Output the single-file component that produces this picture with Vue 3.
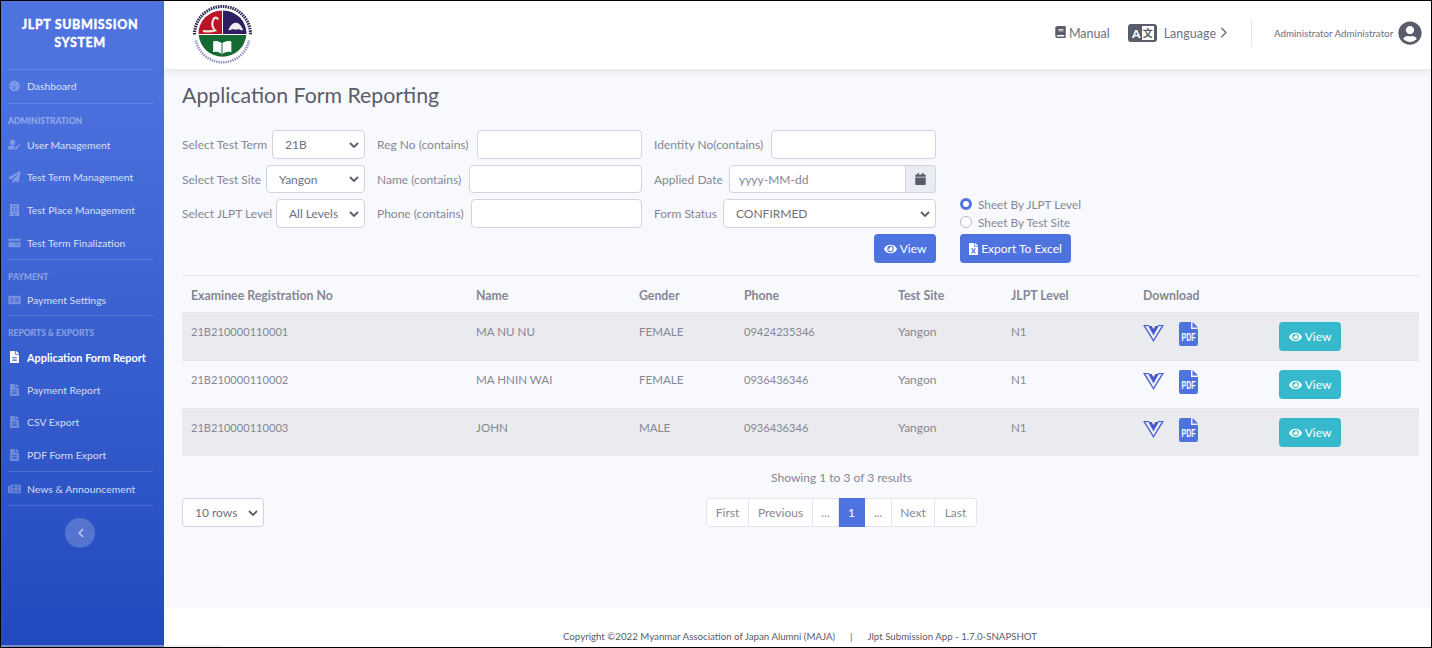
<template>
  <div class="frame">
    <aside class="sidebar">
      <div class="brand">JLPT SUBMISSION<br />SYSTEM</div>
      <template v-for="(group, g) in navGroups" :key="g">
        <div class="side-line"></div>
        <div v-if="group.title" class="side-title">{{ group.title }}</div>
        <a
          v-for="item in group.items"
          :key="item.label"
          class="nav-item"
          :class="{ active: item.active, compact: group.compact }"
        >
          <svg class="nav-icon" :viewBox="icons[item.icon].box" fill="currentColor"><path :d="icons[item.icon].d" /></svg>
          <span>{{ item.label }}</span>
        </a>
      </template>
      <div class="side-line"></div>
      <button class="collapse-btn">
        <svg viewBox="0 0 10 14" width="7" height="10" fill="none" stroke="currentColor" stroke-width="2.4" stroke-linecap="round" stroke-linejoin="round"><path d="M8 2 3 7l5 5" /></svg>
      </button>
    </aside>

    <div class="main">
      <header class="topbar">
        <svg class="logo" viewBox="0 0 60 60">
          <path d="M1.500 30a28.500 28.500 0 0 1 57 0" fill="none" stroke="#2b2a55" stroke-width="3.200" stroke-dasharray="1.600 .9" />
          <path d="M3 36a27.500 27.500 0 0 0 54 0" fill="none" stroke="#8f8dc4" stroke-width="2.600" stroke-dasharray="1.400 1" />
          <path d="M29.500 29.500H5.500A24 24 0 0 1 29.500 5.500z" fill="#b8152a" />
          <path d="M30.500 29.500h24A24 24 0 0 0 30.500 5.500z" fill="#2c1e60" />
          <path d="M5.800 30.500h48.400A24.300 24.300 0 0 1 5.800 30.500z" fill="#146a32" />
          <path d="M11 26.500c4 .5 8 .5 11.500-.5-3-3-4-7-1.500-12 1-1.500 3-1.500 4 0" fill="none" stroke="#f2e6d8" stroke-width="2.200" stroke-linecap="round" />
          <path d="M36 25.500c1.500-4 4-7.500 7.500-7.500s6 3.500 7.500 7.500c-2 .5-3.500 0-4.500-1-2 1-4 1-6 0-1.500 1-3 1.500-4.500 1z" fill="#eeeef4" />
          <path d="M20.500 37c4-1 6.500 0 9 2 2.500-2 5.500-3 9.500-2v11c-4-1-7 0-9.500 2-2.500-2-5-3-9-2z" fill="#fff" />
          <path d="M29.500 39v11" stroke="#146a32" stroke-width="1" />
        </svg>
        <div class="top-right">
          <a class="top-link">
            <svg class="book" viewBox="0 0 448 512" fill="currentColor"><path :d="icons.book.d" /></svg>
            <span>Manual</span>
          </a>
          <a class="top-link lang">
            <span class="lang-icon"><span class="lang-a">A</span><span class="lang-b">文</span></span>
            <span>Language</span>
            <svg class="chev" viewBox="0 0 10 14" fill="none" stroke="currentColor" stroke-width="1.800" stroke-linecap="round" stroke-linejoin="round"><path d="M2 1.500 7.500 7 2 12.500" /></svg>
          </a>
          <div class="top-sep"></div>
          <span class="user-name">Administrator Administrator</span>
          <svg class="avatar" viewBox="0 0 496 512" fill="currentColor"><path :d="icons.user.d" /></svg>
        </div>
      </header>

      <main class="content">
        <h1 class="page-title">Application Form Reporting</h1>

        <form class="filters" @submit.prevent>
          <div class="f-col col1">
            <div v-for="f in col1" :key="f.label" class="f-row" :class="f.size">
              <label :style="{ width: f.w + 'px' }">{{ f.label }}</label>
              <select class="ctl sel"><option>{{ f.value }}</option></select>
            </div>
          </div>
          <div class="f-col col2">
            <div v-for="f in col2" :key="f.label" class="f-row" :class="f.size">
              <label :style="{ width: f.w + 'px' }">{{ f.label }}</label>
              <input class="ctl" type="text" />
            </div>
          </div>
          <div class="f-col col3">
            <div class="f-row h29">
              <label class="lw117">Identity No(contains)</label>
              <input class="ctl" type="text" />
            </div>
            <div class="f-row h28">
              <label class="lw75">Applied Date</label>
              <div class="date-group">
                <input class="ctl date-input" type="text" placeholder="yyyy-MM-dd" />
                <span class="date-btn">
                  <svg viewBox="0 0 448 512" width="11" height="12" fill="currentColor"><path :d="icons.calendar.d" /></svg>
                </span>
              </div>
            </div>
            <div class="f-row h29">
              <label class="lw69">Form Status</label>
              <select class="ctl sel"><option>CONFIRMED</option></select>
            </div>
            <div class="f-row h29 end">
              <button type="button" class="btn primary view-main">
                <svg class="eye" viewBox="0 0 576 512" fill="currentColor"><path :d="icons.eye.d" /></svg>
                View
              </button>
            </div>
          </div>
          <div class="f-col col4">
            <label class="radio"><span class="dot on"></span>Sheet By JLPT Level</label>
            <label class="radio"><span class="dot"></span>Sheet By Test Site</label>
            <button type="button" class="btn primary export">
              <svg class="file-x" viewBox="0 0 384 512" fill="currentColor"><path :d="icons.fileExcel.d" /></svg>
              Export To Excel
            </button>
          </div>
        </form>

        <table class="grid">
          <colgroup>
            <col v-for="w in colWidths" :key="w.k" :style="{ width: w.v + 'px' }" />
          </colgroup>
          <thead>
            <tr>
              <th>Examinee Registration No</th>
              <th>Name</th>
              <th>Gender</th>
              <th>Phone</th>
              <th>Test Site</th>
              <th>JLPT Level</th>
              <th>Download</th>
              <th></th>
            </tr>
          </thead>
          <tbody>
            <tr v-for="r in rows" :key="r.reg">
              <td class="num">{{ r.reg }}</td>
              <td class="caps">{{ r.name }}</td>
              <td class="caps">{{ r.gender }}</td>
              <td class="num">{{ r.phone }}</td>
              <td>Yangon</td>
              <td class="caps">N1</td>
              <td class="act-cell">
                <div class="dl">
                  <svg class="vee" viewBox="0 0 21 17">
                    <path d="M0 0h6l4.500 8L15 0h6L10.500 17z" fill="#4e63cf" />
                    <path d="M2.400 1h2.800l5.300 9.500L15.800 1h2.800L10.500 14.500z" fill="#eef0fa" />
                    <path d="M6.200 1h2.400l1.900 3.200L12.400 1h2.400l-4.300 7.600z" fill="#3f55c8" />
                  </svg>
                  <svg class="pdf" viewBox="0 0 19 24">
                    <path d="M2 0h10v7h7v15a2 2 0 0 1-2 2H2a2 2 0 0 1-2-2V2a2 2 0 0 1 2-2z" fill="#4e73df" />
                    <path d="M13.500 0 19 5.500h-5.500z" fill="#4e73df" />
                    <text transform="translate(2.500 19) scale(.7 1)" class="pdf-text">PDF</text>
                  </svg>
                </div>
              </td>
              <td class="act-cell">
                <button class="btn info">
                  <svg class="eye" viewBox="0 0 576 512" fill="currentColor"><path :d="icons.eye.d" /></svg>
                  View
                </button>
              </td>
            </tr>
          </tbody>
        </table>

        <div class="showing">Showing 1 to 3 of 3 results</div>
        <div class="pager-row">
          <select class="ctl sel rows-sel"><option>10 rows</option></select>
          <ul class="pager">
            <li v-for="p in pages" :key="p.k" :class="{ current: p.current }" :style="{ width: p.w + 'px' }">{{ p.label }}</li>
          </ul>
        </div>
      </main>

      <footer class="footer">
        <span>Copyright ©2022 Myanmar Association of Japan Alumni (MAJA)</span>
        <span class="foot-bar">|</span>
        <span>Jlpt Submission App - 1.7.0-SNAPSHOT</span>
      </footer>
    </div>
    <div class="bottom-strip"></div>
  </div>
</template>

<script setup>
const icons = {
  gauge: { box: '0 0 16 16', d: 'M8 1a7 7 0 1 0 0 14A7 7 0 0 0 8 1zm0 2.200a1 1 0 1 1 0 2 1 1 0 0 1 0-2zM4 7a1 1 0 1 1 0 2 1 1 0 0 1 0-2zm8 0a1 1 0 1 1 0 2 1 1 0 0 1 0-2zM8.800 6.500l.8.300-1 3.300a1.500 1.500 0 1 1-1.200-.4z' },
  userEdit: { box: '0 0 20 16', d: 'M7 0a4 4 0 1 1 0 8 4 4 0 0 1 0-8zM3 9h6.500c.5 0 1 .1 1.400.3L9 12.500V15H1.500A1.500 1.500 0 0 1 0 13.500V12a3 3 0 0 1 3-3zm7 4.500 5-5 2 2-5 5h-2zM16 7.500l1-1a.7.7 0 0 1 1 0l1 1a.7.7 0 0 1 0 1l-1 1z' },
  plane: { box: '0 0 512 512', d: 'M476 3.200L12.500 270.600c-18.100 10.400-15.800 35.600 2.200 43.200L121 358.400l287.300-253.200c5.500-4.900 13.300 2.600 8.600 8.300L176 407v80.500c0 23.600 28.500 32.900 42.500 15.800L282 426l124.600 52.200c14.200 6 30.400-2.900 33-18.200l72-432C515 7.800 493.300-6.800 476 3.200z' },
  building: { box: '0 0 448 512', d: 'M436 480h-20V24c0-13.300-10.700-24-24-24H56C42.700 0 32 10.700 32 24v456H12c-6.600 0-12 5.400-12 12v20h448v-20c0-6.600-5.400-12-12-12zM128 76c0-6.600 5.400-12 12-12h40c6.600 0 12 5.400 12 12v40c0 6.600-5.400 12-12 12h-40c-6.600 0-12-5.400-12-12V76zm0 96c0-6.600 5.400-12 12-12h40c6.600 0 12 5.400 12 12v40c0 6.600-5.400 12-12 12h-40c-6.600 0-12-5.400-12-12v-40zm52 148h-40c-6.600 0-12-5.400-12-12v-40c0-6.600 5.400-12 12-12h40c6.600 0 12 5.400 12 12v40c0 6.600-5.400 12-12 12zm76 160h-64v-84c0-6.600 5.400-12 12-12h40c6.600 0 12 5.400 12 12v84zm64-172c0 6.600-5.400 12-12 12h-40c-6.600 0-12-5.400-12-12v-40c0-6.600 5.400-12 12-12h40c6.600 0 12 5.400 12 12v40zm0-96c0 6.600-5.400 12-12 12h-40c-6.600 0-12-5.400-12-12v-40c0-6.600 5.400-12 12-12h40c6.600 0 12 5.400 12 12v40zm0-96c0 6.600-5.400 12-12 12h-40c-6.600 0-12-5.400-12-12V76c0-6.600 5.400-12 12-12h40c6.600 0 12 5.400 12 12v40z' },
  card: { box: '0 0 18 14', d: 'M2 1h14a1.500 1.500 0 0 1 1.500 1.500V4H.5V2.500A1.500 1.500 0 0 1 2 1zM.5 6h17v5.500A1.500 1.500 0 0 1 16 13H2a1.500 1.500 0 0 1-1.500-1.500zM10 8v1.500h5V8z' },
  idCard: { box: '0 0 18 14', d: 'M2 1h14a1.500 1.500 0 0 1 1.500 1.500v9A1.500 1.500 0 0 1 16 13H2a1.500 1.500 0 0 1-1.500-1.500v-9A1.500 1.500 0 0 1 2 1zm3.500 2.500a1.500 1.500 0 1 0 0 3 1.500 1.500 0 0 0 0-3zM3 9.500h5V8H3zm7-5v1.500h5V4.500zm0 3v1.500h5V7.500z' },
  file: { box: '0 0 384 512', d: 'M224 136V0H24C10.700 0 0 10.700 0 24v464c0 13.300 10.700 24 24 24h336c13.300 0 24-10.700 24-24V160H248c-13.200 0-24-10.800-24-24zM96 264h192v32H96zm0 64h192v32H96zm0 64h192v32H96zM377 105 279.100 7c-4.500-4.500-10.600-7-17-7H256v128h128v-6.100c0-6.300-2.500-12.400-7-16.900z' },
  news: { box: '0 0 18 14', d: 'M4 1h12.500A1.500 1.500 0 0 1 18 2.500v9a1.500 1.500 0 0 1-1.500 1.500H2a2 2 0 0 1-2-2V3h2.500v8h1V2a1 1 0 0 1 .5-1zm2 2v3h4V3zm6 0v1h4V3zm0 2v1h4V5zM6 8v1h4V8zm6 0v1h4V8zm-6 2v1h4v-1zm6 0v1h4v-1z' },
  book: { box: '0 0 448 512', d: 'M448 360V24c0-13.300-10.700-24-24-24H96C43 0 0 43 0 96v320c0 53 43 96 96 96h328c13.300 0 24-10.700 24-24v-16c0-7.500-3.500-14.300-8.900-18.700-4.200-15.400-4.200-59.300 0-74.700 5.400-4.300 8.900-11.100 8.900-18.600zM128 134c0-3.300 2.700-6 6-6h212c3.300 0 6 2.700 6 6v20c0 3.300-2.700 6-6 6H134c-3.300 0-6-2.700-6-6v-20zm0 64c0-3.300 2.700-6 6-6h212c3.300 0 6 2.700 6 6v20c0 3.300-2.700 6-6 6H134c-3.300 0-6-2.700-6-6v-20zm253.400 250H96c-17.700 0-32-14.300-32-32 0-17.600 14.400-32 32-32h285.400c-1.900 17.100-1.900 46.900 0 64z' },
  user: { box: '0 0 496 512', d: 'M248 8C111 8 0 119 0 256s111 248 248 248 248-111 248-248S385 8 248 8zm0 96c48.600 0 88 39.400 88 88s-39.400 88-88 88-88-39.400-88-88 39.400-88 88-88zm0 344c-58.700 0-111.300-26.600-146.500-68.200 18.800-35.400 55.600-59.800 98.500-59.800 2.400 0 4.800.4 7.100 1.100 13 4.200 26.600 6.900 40.900 6.900 14.300 0 28-2.700 40.900-6.900 2.300-.7 4.700-1.100 7.100-1.100 42.900 0 79.700 24.400 98.500 59.800C359.300 421.400 306.700 448 248 448z' },
  calendar: { box: '0 0 448 512', d: 'M12 192h424c6.600 0 12 5.400 12 12v260c0 26.500-21.500 48-48 48H48c-26.500 0-48-21.500-48-48V204c0-6.600 5.400-12 12-12zm436-44v-36c0-26.500-21.500-48-48-48h-48V12c0-6.600-5.400-12-12-12h-40c-6.600 0-12 5.400-12 12v52H160V12c0-6.600-5.400-12-12-12h-40c-6.600 0-12 5.400-12 12v52H48C21.500 64 0 85.500 0 112v36c0 6.600 5.400 12 12 12h424c6.600 0 12-5.400 12-12z' },
  eye: { box: '0 0 576 512', d: 'M572.520 241.400C518.290 135.590 410.930 64 288 64S57.680 135.640 3.480 241.410a32.350 32.350 0 0 0 0 29.190C57.710 376.410 165.070 448 288 448s230.320-71.640 284.520-177.410a32.350 32.350 0 0 0 0-29.190zM288 400a144 144 0 1 1 144-144 143.930 143.930 0 0 1-144 144zm0-240a95.310 95.310 0 0 0-25.310 3.790 47.850 47.850 0 0 1-66.900 66.900A95.780 95.780 0 1 0 288 160z' },
  fileExcel: { box: '0 0 384 512', d: 'M224 136V0H24C10.700 0 0 10.700 0 24v464c0 13.300 10.700 24 24 24h336c13.300 0 24-10.700 24-24V160H248c-13.200 0-24-10.800-24-24zm60.100 106.500L224 336l60.100 93.500c5.100 8-.6 18.500-10.100 18.500h-34.900c-4.400 0-8.500-2.400-10.600-6.300C208.900 405.500 192 373 192 373c-6.100 14.100-9.500 19-36.600 68.800-2.100 3.900-6.100 6.300-10.500 6.300H110c-9.500 0-15.200-10.500-10.100-18.500l60.300-93.500-60.300-93.500c-5.200-8 .6-18.500 10.100-18.500h34.800c4.400 0 8.500 2.400 10.600 6.300 26.100 48.800 20 33.600 36.600 68.500 0 0 6.100-11.700 36.600-68.500 2.100-3.900 6.200-6.300 10.600-6.300H274c9.500-.1 15.200 10.400 10.100 18.400zM384 121.900v6.100H256V0h6.100c6.400 0 12.500 2.500 17 7l97.900 98c4.500 4.500 7 10.600 7 16.900z' }
}

const navGroups = [
  { items: [{ label: 'Dashboard', icon: 'gauge' }] },
  {
    title: 'Administration',
    items: [
      { label: 'User Management', icon: 'userEdit' },
      { label: 'Test Term Management', icon: 'plane' },
      { label: 'Test Place Management', icon: 'building' },
      { label: 'Test Term Finalization', icon: 'card' }
    ]
  },
  { title: 'Payment', compact: true, items: [{ label: 'Payment Settings', icon: 'idCard' }] },
  {
    title: 'Reports & Exports',
    items: [
      { label: 'Application Form Report', icon: 'file', active: true },
      { label: 'Payment Report', icon: 'file' },
      { label: 'CSV Export', icon: 'file' },
      { label: 'PDF Form Export', icon: 'file' }
    ]
  },
  { items: [{ label: 'News & Announcement', icon: 'news' }] }
]

const col1 = [
  { label: 'Select Test Term', value: '21B', w: 90, size: 'h29' },
  { label: 'Select Test Site', value: 'Yangon', w: 84, size: 'h28' },
  { label: 'Select JLPT Level', value: 'All Levels', w: 94, size: 'h29' }
]
const col2 = [
  { label: 'Reg No (contains)', w: 100, size: 'h29' },
  { label: 'Name (contains)', w: 92, size: 'h28' },
  { label: 'Phone (contains)', w: 94, size: 'h29' }
]

const colWidths = [285, 163, 105, 154, 113, 132, 136, 149].map((v, k) => ({ k, v }))

const rows = [
  { reg: '21B210000110001', name: 'MA NU NU', gender: 'FEMALE', phone: '09424235346' },
  { reg: '21B210000110002', name: 'MA HNIN WAI', gender: 'FEMALE', phone: '0936436346' },
  { reg: '21B210000110003', name: 'JOHN', gender: 'MALE', phone: '0936436346' }
]

const pages = [
  { k: 'first', label: 'First', w: 43 },
  { k: 'prev', label: 'Previous', w: 64 },
  { k: 'd1', label: '...', w: 26 },
  { k: 'cur', label: '1', w: 26, current: true },
  { k: 'd2', label: '...', w: 27 },
  { k: 'next', label: 'Next', w: 43 },
  { k: 'last', label: 'Last', w: 42 }
]
</script>

<style>
html, body {
  margin: 0;
  background: #000;
}
</style>

<style scoped>
.frame {
  position: relative;
  width: 1432px;
  height: 648px;
  box-sizing: border-box;
  border: 1px solid #000;
  display: flex;
  overflow: hidden;
  font-family: Lato, "Noto Sans", sans-serif;
  font-size: 12px;
  color: #858796;
}

/* sidebar */
.sidebar {
  width: 163px;
  flex: none;
  display: flex;
  flex-direction: column;
  background: linear-gradient(180deg, #4e73df 10%, #224abe 100%);
  color: rgba(255, 255, 255, 0.8);
}
.brand {
  height: 68px;
  box-sizing: border-box;
  padding: 15px 5px 0 0;
  text-align: center;
  color: #fff;
  font-weight: 900;
  font-size: 12.500px;
  line-height: 18px;
  letter-spacing: 0.6px;
  -webkit-text-stroke: 0.3px #fff;
}
.side-line {
  height: 1px;
  flex: none;
  margin: 0 11px 0 7px;
  background: rgba(255, 255, 255, 0.15);
}
.side-title {
  height: 25px;
  box-sizing: border-box;
  padding: 11px 0 0 7px;
  font-size: 8.500px;
  line-height: 12px;
  font-weight: 900;
  text-transform: uppercase;
  color: rgba(255, 255, 255, 0.4);
}
.nav-item {
  height: 32.600px;
  flex: none;
  display: flex;
  align-items: center;
  padding-left: 7px;
  gap: 6px;
  font-size: 10.400px;
}
.nav-item.compact {
  height: 30px;
}
.nav-item.active {
  color: #fff;
  font-weight: 700;
  font-size: 10.900px;
}
.nav-icon {
  width: 13px;
  height: 12px;
  color: rgba(255, 255, 255, 0.3);
  flex: none;
}
.active .nav-icon {
  color: #fff;
}
.collapse-btn {
  width: 30px;
  height: 30px;
  margin: 12px 0 0 64px;
  padding: 0;
  border: 0;
  border-radius: 50%;
  background: rgba(255, 255, 255, 0.2);
  color: rgba(255, 255, 255, 0.6);
  display: flex;
  align-items: center;
  justify-content: center;
}
.bottom-strip {
  position: absolute;
  left: 0;
  bottom: 0;
  width: 221px;
  height: 2px;
  background: rgba(225, 225, 228, 0.45);
}

/* main column */
.main {
  flex: 1;
  min-width: 0;
  display: flex;
  flex-direction: column;
  background: #fff;
}
.topbar {
  height: 68px;
  flex: none;
  box-sizing: border-box;
  display: flex;
  align-items: center;
  justify-content: space-between;
  padding: 0 9px 4px 29px;
  background: #fff;
  box-shadow: 0 2px 8px rgba(58, 59, 69, 0.12);
  position: relative;
  z-index: 1;
}
.logo {
  width: 59px;
  height: 59px;
  margin-top: 2px;
}
.top-right {
  display: flex;
  align-items: center;
  color: #5a5c69;
}
.top-link {
  display: flex;
  align-items: center;
  font-size: 12.500px;
  color: #6e707e;
}
.book {
  width: 11px;
  height: 12px;
  margin-right: 3px;
  color: #5a5c69;
  margin-top: -2px;
}
.lang {
  margin-left: 18px;
}
.lang-icon {
  width: 29px;
  height: 18px;
  box-sizing: border-box;
  padding: 2px 3px 2px 3px;
  margin-right: 7px;
  background: #5a5c69;
  border-radius: 3px;
  display: flex;
  align-items: center;
  justify-content: space-between;
  color: #fff;
  font-size: 12px;
  font-weight: 900;
}
.lang-a {
  width: 11px;
  text-align: center;
}
.lang-b {
  width: 12px;
  height: 14px;
  background: #fff;
  color: #5a5c69;
  font-size: 10px;
  font-weight: 700;
  line-height: 14px;
  text-align: center;
  font-family: "Noto Sans CJK SC", sans-serif;
}
.chev {
  width: 8px;
  height: 11px;
  margin-left: 4px;
  margin-top: -2px;
}
.top-sep {
  width: 1px;
  height: 28px;
  margin: 0 22px 0 23px;
  background: #e3e6f0;
}
.user-name {
  font-size: 9.750px;
  color: #6e707e;
  width: 118px;
  white-space: nowrap;
}
.avatar {
  width: 24px;
  height: 24px;
  margin-left: 6px;
}

/* content */
.content {
  flex: 1;
  min-height: 0;
  box-sizing: border-box;
  padding: 12px 12px 0 18px;
  background: #f8f9fc;
}
.page-title {
  margin: 0 0 21px;
  font-size: 21.300px;
  line-height: 28px;
  font-weight: 400;
  color: #5a5c69;
}
.filters {
  display: flex;
  align-items: stretch;
  border-bottom: 1px solid #e3e6f0;
  padding-bottom: 12px;
  height: 133px;
}
.f-col {
  display: flex;
  flex-direction: column;
  gap: 6px;
}
.col1 { width: 183px; }
.col2 { width: 265px; margin-left: 12px; }
.col3 { width: 282px; margin-left: 12px; }
.col4 {
  margin-left: 24px;
  gap: 0;
  justify-content: flex-end;
}
.f-row {
  display: flex;
  align-items: stretch;
}
.h29 { height: 29px; }
.h28 { height: 28px; }
.end { justify-content: flex-end; }
.f-row label {
  flex: none;
  align-self: center;
  white-space: nowrap;
  color: #858796;
}
.lw117 { width: 117px; }
.lw75 { width: 75px; }
.lw69 { width: 69px; }
.ctl {
  flex: 1;
  min-width: 0;
  box-sizing: border-box;
  height: 100%;
  border: 1px solid #d1d3e2;
  border-radius: 4px;
  background: #fff;
  padding: 0 12px;
  font: inherit;
  color: #6e707e;
  outline: none;
}
.ctl::placeholder {
  color: #858796;
}
.sel {
  appearance: none;
  padding: 0 20px 0 12px;
  background-image: url("data:image/svg+xml,%3Csvg xmlns='http://www.w3.org/2000/svg' viewBox='0 0 10 6'%3E%3Cpath d='M1 1l4 4 4-4' fill='none' stroke='%235a5c69' stroke-width='1.8'/%3E%3C/svg%3E");
  background-repeat: no-repeat;
  background-position: right 5px center;
  background-size: 10px 6px;
}
.date-group {
  flex: 1;
  min-width: 0;
  display: flex;
}
.date-input {
  border-radius: 4px 0 0 4px;
  padding-left: 9px;
}
.date-btn {
  width: 30px;
  flex: none;
  box-sizing: border-box;
  border: 1px solid #d1d3e2;
  border-left: 0;
  border-radius: 0 4px 4px 0;
  background: #eaecf4;
  color: #5a5c69;
  display: flex;
  align-items: center;
  justify-content: center;
}
.radio {
  display: flex;
  align-items: center;
  height: 18px;
  font-size: 11.800px;
  white-space: nowrap;
}
.dot {
  width: 12px;
  height: 12px;
  box-sizing: border-box;
  margin-right: 6px;
  border: 1px solid #b7b9cc;
  border-radius: 50%;
  background: #fff;
}
.dot.on {
  border: 3.500px solid #4e73df;
}
.btn {
  height: 29px;
  box-sizing: border-box;
  padding: 0;
  border: 0;
  border-radius: 4px;
  color: #fff;
  font: inherit;
  display: inline-flex;
  align-items: center;
  justify-content: center;
}
.primary {
  background: #4e73df;
}
.info {
  background: #36b9cc;
  width: 62px;
}
.view-main {
  width: 62px;
}
.export {
  width: 111px;
  margin-top: 3px;
}
.eye {
  width: 13px;
  height: 12px;
  margin-right: 3px;
}
.file-x {
  width: 9px;
  height: 12px;
  margin-right: 3px;
}

/* table */
.grid {
  width: 1237px;
  table-layout: fixed;
  border-collapse: collapse;
}
.grid th {
  padding: 11px 9px 7px;
  text-align: left;
  font-weight: 700;
  font-size: 12.300px;
  line-height: 18px;
  white-space: nowrap;
}
.grid td {
  padding: 10px 9px 8px;
  vertical-align: top;
  line-height: 18px;
  border-top: 1px solid #e3e6f0;
}
.grid td.act-cell {
  padding: 9px;
}
.grid td.num {
  font-size: 11.100px;
}
.grid td.caps {
  font-size: 11.600px;
}
.grid tbody tr:nth-child(odd) {
  background: #eaebef;
}
.dl {
  display: flex;
  align-items: flex-start;
}
.vee {
  width: 21px;
  height: 17px;
  margin-top: 3px;
}
.pdf {
  width: 19px;
  height: 24px;
  margin-left: 15px;
}
.pdf-text {
  font-family: "Liberation Sans", sans-serif;
  font-size: 10px;
  font-weight: 700;
  fill: #fff;
}
.showing {
  width: 1319px;
  margin-top: 13px;
  text-align: center;
  line-height: 18px;
}
.pager-row {
  display: flex;
  height: 29px;
  margin-top: 11px;
}
.rows-sel {
  flex: none;
  width: 82px;
}
.pager {
  display: flex;
  margin: 0 0 0 442px;
  padding: 0;
  list-style: none;
}
.pager li {
  box-sizing: border-box;
  height: 29px;
  line-height: 27px;
  text-align: center;
  background: #fff;
  border: 1px solid #e3e6f0;
  border-left-width: 0;
}
.pager li:first-child {
  border-left-width: 1px;
  border-radius: 4px 0 0 4px;
}
.pager li:last-child {
  border-radius: 0 4px 4px 0;
}
.pager li.current {
  background: #4e73df;
  border-color: #4e73df;
  color: #fff;
}

.footer {
  height: 39px;
  flex: none;
  box-sizing: border-box;
  padding: 21px 0 0 5px;
  background: #fff;
  display: flex;
  justify-content: center;
  font-size: 9.700px;
  line-height: 14px;
  color: #5a5c69;
}
.foot-bar {
  margin: 0 15px;
}
</style>
